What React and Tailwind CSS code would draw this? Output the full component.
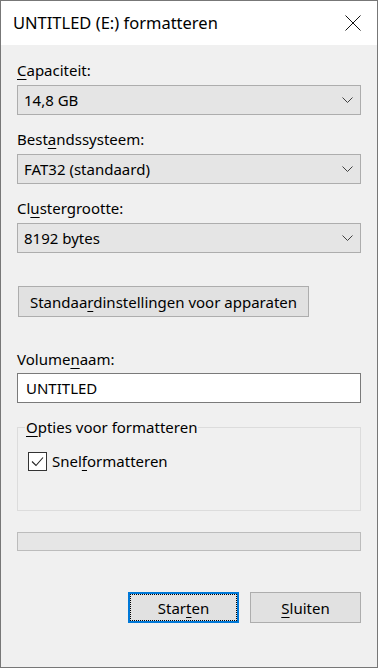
import React from "react";

function U({ children }) {
  return <span className="underline decoration-1 underline-offset-[3px]">{children}</span>;
}

function Chevron() {
  return (
    <svg width="11" height="6" viewBox="0 0 11 6" className="shrink-0">
      <path d="M0.5 0.5 L5.5 5.5 L10.5 0.5" stroke="#404040" strokeWidth="1" fill="none" />
    </svg>
  );
}

function Combo({ value }) {
  return (
    <div className="h-[30px] border border-[#adadad] bg-[#e5e5e5] flex items-center justify-between pl-[6px] pr-[7px]">
      <span className="leading-[20px]">{value}</span>
      <Chevron />
    </div>
  );
}

export default function App() {
  return (
    <div className="w-[378px] h-[668px] border border-[#777777] flex flex-col bg-[#f0f0f0] text-black text-[15px] leading-[20px] font-['Noto_Sans',sans-serif] overflow-hidden">
      <div className="h-[44px] shrink-0 bg-white flex items-center justify-between pl-[12px] pr-[16px]">
        <span className="text-[16.5px]">UNTITLED (E:) formatteren</span>
        <svg width="16" height="16" viewBox="0 0 16 16">
          <path d="M0.5 0.5 L15.5 15.5 M15.5 0.5 L0.5 15.5" stroke="#111" strokeWidth="1" fill="none" />
        </svg>
      </div>
      <div className="flex flex-col px-[16px] pt-[15px]">
        <div className="h-[20px]"><U>C</U>apaciteit:</div>
        <div className="mt-[5px]"><Combo value="14,8 GB" /></div>
        <div className="h-[20px] mt-[14px]">Best<U>a</U>ndssysteem:</div>
        <div className="mt-[5px]"><Combo value="FAT32 (standaard)" /></div>
        <div className="h-[20px] mt-[14px]">Cl<U>u</U>stergrootte:</div>
        <div className="mt-[5px]"><Combo value="8192 bytes" /></div>
        <div className="mt-[33px] ml-[1px] w-[291px] h-[31px] border border-[#adadad] bg-[#e1e1e1] flex items-center justify-center">
          <span>Standaa<U>r</U>dinstellingen voor apparaten</span>
        </div>
        <div className="h-[20px] mt-[32px]">Volume<U>n</U>aam:</div>
        <div className="mt-[4px] h-[30px] border border-[#7a7a7a] bg-white flex items-center pl-[8px]">UNTITLED</div>
        <fieldset className="mt-[14px] h-[94px] border border-[#dcdcdc] px-0 pb-0">
          <legend className="ml-[7px] px-[1px] leading-[20px]"><U>O</U>pties voor formatteren</legend>
          <div className="mt-[14px] ml-[10px] flex items-center gap-[5px]">
            <div className="w-[19px] h-[19px] border border-[#333333] bg-white flex items-center justify-center">
              <svg width="17" height="17" viewBox="0 0 17 17">
                <path d="M3 8.5 L7 12.5 L14 4.5" stroke="#222" strokeWidth="1.1" fill="none" />
              </svg>
            </div>
            <span>Snel<U>f</U>ormatteren</span>
          </div>
        </fieldset>
        <div className="mt-[21px] h-[19px] border border-[#bcbcbc] bg-[#e6e6e6]"></div>
        <div className="mt-[41px] flex justify-end gap-[11px]">
          <div className="w-[111px] h-[31px] border-2 border-[#0078d7] bg-[#e1e1e1]">
            <div className="w-full h-full border border-dotted border-black flex items-center justify-center">
              <span>Star<U>t</U>en</span>
            </div>
          </div>
          <div className="w-[111px] h-[31px] border border-[#adadad] bg-[#e1e1e1] flex items-center justify-center">
            <span><U>S</U>luiten</span>
          </div>
        </div>
      </div>
    </div>
  );
}
